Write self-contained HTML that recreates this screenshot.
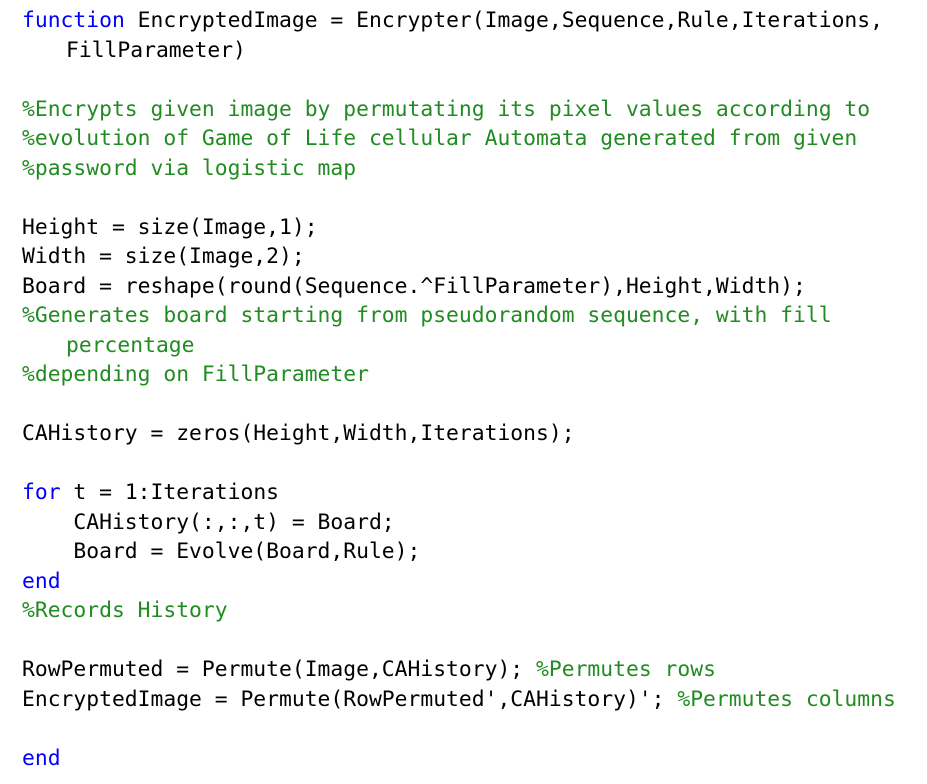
<!DOCTYPE html>
<html><head><style>
html,body{margin:0;background:#fff;width:927px;height:784px;overflow:hidden}
pre{margin:0;position:absolute;left:22px;top:6px;font-family:"DejaVu Sans Mono","Liberation Mono",monospace;font-size:21.35px;line-height:29.52px;color:#000}
.k{color:#0000ff}.c{color:#228b22}
.i{padding-left:44px}
</style></head><body><pre><span class="k">function</span> EncryptedImage = Encrypter(Image,Sequence,Rule,Iterations,
<span class="i">FillParameter)</span>

<span class="c">%Encrypts given image by permutating its pixel values according to</span>
<span class="c">%evolution of Game of Life cellular Automata generated from given</span>
<span class="c">%password via logistic map</span>

Height = size(Image,1);
Width = size(Image,2);
Board = reshape(round(Sequence.^FillParameter),Height,Width);
<span class="c">%Generates board starting from pseudorandom sequence, with fill</span>
<span class="c i">percentage</span>
<span class="c">%depending on FillParameter</span>

CAHistory = zeros(Height,Width,Iterations);

<span class="k">for</span> t = 1:Iterations
    CAHistory(:,:,t) = Board;
    Board = Evolve(Board,Rule);
<span class="k">end</span>
<span class="c">%Records History</span>

RowPermuted = Permute(Image,CAHistory); <span class="c">%Permutes rows</span>
EncryptedImage = Permute(RowPermuted',CAHistory)'; <span class="c">%Permutes columns</span>

<span class="k">end</span></pre></body></html>
